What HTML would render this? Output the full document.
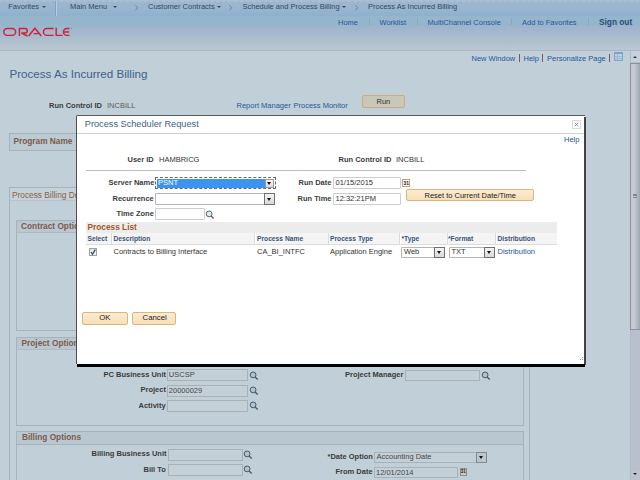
<!DOCTYPE html><html><head><meta charset="utf-8"><style>
html,body{margin:0;padding:0;width:640px;height:480px;overflow:hidden;background:#c1d0d8;}
.t{position:absolute;white-space:pre;font-family:"Liberation Sans", sans-serif;}
</style></head><body>
<div style="position:absolute;left:0px;top:0px;width:640px;height:16px;background:linear-gradient(#9db7cf,#9ab5ce 50%,#90b0ce);"></div>
<div style="position:absolute;left:0px;top:0px;width:640px;height:1px;background:#a9bed3;"></div>
<div style="position:absolute;left:0px;top:1px;width:640px;height:1px;background:repeating-linear-gradient(90deg,#adc1d5 0 3px,#9fb8d0 3px 6px);"></div>
<div style="position:absolute;left:0px;top:16px;width:640px;height:35px;background:linear-gradient(#94b6cc 0px,#96b5cc 9px,#a0b5cc 12px,#a8b7cf 18px,#abbdcb 22px,#b2c1ce 28px,#bac8d5 34px,#bac8d5 35px);"></div>
<div style="position:absolute;left:0px;top:50px;width:640px;height:1.5px;background:#acb7c2;"></div>
<div style="position:absolute;left:0px;top:51px;width:640px;height:429px;background:#c1d0d8;"></div>
<div class="t" style="left:8.25px;top:2.82px;font-size:7.5px;line-height:7.5px;color:#33476a;font-weight:normal;">Favorites</div>
<div class="t" style="left:70.00px;top:2.82px;font-size:7.5px;line-height:7.5px;color:#33476a;font-weight:normal;">Main Menu</div>
<div class="t" style="left:148.00px;top:2.82px;font-size:7.5px;line-height:7.5px;color:#33476a;font-weight:normal;">Customer Contracts</div>
<div class="t" style="left:242.50px;top:2.82px;font-size:7.5px;line-height:7.5px;color:#33476a;font-weight:normal;">Schedule and Process Billing</div>
<div class="t" style="left:368.00px;top:2.82px;font-size:7.5px;line-height:7.5px;color:#33476a;font-weight:normal;">Process As Incurred Billing</div>
<div style="position:absolute;left:42px;top:6px;width:0;height:0;border-left:2.3px solid transparent;border-right:2.3px solid transparent;border-top:2.6px solid #3d4650;"></div>
<div style="position:absolute;left:112.5px;top:6px;width:0;height:0;border-left:2.3px solid transparent;border-right:2.3px solid transparent;border-top:2.6px solid #3d4650;"></div>
<div style="position:absolute;left:216.5px;top:6px;width:0;height:0;border-left:2.3px solid transparent;border-right:2.3px solid transparent;border-top:2.6px solid #3d4650;"></div>
<div style="position:absolute;left:342px;top:6px;width:0;height:0;border-left:2.3px solid transparent;border-right:2.3px solid transparent;border-top:2.6px solid #3d4650;"></div>
<svg style="position:absolute;left:134.5px;top:5px" width="4" height="6" viewBox="0 0 4 6"><polyline points="0.4,0.3 2.7,2.8 0.4,5.3" fill="none" stroke="#667c98" stroke-width="0.9"/></svg>
<svg style="position:absolute;left:229px;top:5px" width="4" height="6" viewBox="0 0 4 6"><polyline points="0.4,0.3 2.7,2.8 0.4,5.3" fill="none" stroke="#667c98" stroke-width="0.9"/></svg>
<svg style="position:absolute;left:355px;top:5px" width="4" height="6" viewBox="0 0 4 6"><polyline points="0.4,0.3 2.7,2.8 0.4,5.3" fill="none" stroke="#667c98" stroke-width="0.9"/></svg>
<div style="position:absolute;left:55px;top:1px;width:1px;height:15px;background:#80a0c0;"></div>
<div style="position:absolute;left:56px;top:1px;width:1px;height:15px;background:#bccdda;"></div>
<div class="t" style="left:338.00px;top:18.52px;font-size:7.5px;line-height:7.5px;color:#28559a;font-weight:normal;">Home</div>
<div class="t" style="left:379.50px;top:18.52px;font-size:7.5px;line-height:7.5px;color:#28559a;font-weight:normal;">Worklist</div>
<div class="t" style="left:427.50px;top:18.52px;font-size:7.5px;line-height:7.5px;color:#28559a;font-weight:normal;">MultiChannel Console</div>
<div class="t" style="left:522.00px;top:18.52px;font-size:7.5px;line-height:7.5px;color:#28559a;font-weight:normal;">Add to Favorites</div>
<div class="t" style="left:599.00px;top:17.72px;font-size:8.3px;line-height:8.3px;color:#2d4a76;font-weight:bold;">Sign out</div>
<div style="position:absolute;left:369px;top:17.5px;width:1px;height:7px;background:#8ea6bd;"></div>
<div style="position:absolute;left:416.5px;top:17.5px;width:1px;height:7px;background:#8ea6bd;"></div>
<div style="position:absolute;left:511px;top:17.5px;width:1px;height:7px;background:#8ea6bd;"></div>
<div style="position:absolute;left:587.5px;top:17.5px;width:1px;height:7px;background:#8ea6bd;"></div>
<svg style="position:absolute;left:0;top:20px" width="80" height="20" viewBox="0 20 80 20"><g fill="none" stroke="#c6263c" stroke-width="1.45">
<rect x="3.75" y="28.45" width="11.9" height="6.9" rx="3.45"/>
<path d="M19.4,36 V28.45 H25 A2.3,2.3 0 0 1 25,33.05 H21.5 L27.6,36"/>
<path d="M28.6,36 L34.9,28.2 L41.3,36 M33.6,33.6 H38.3"/>
<path d="M53.6,28.45 H46.9 A3.45,3.45 0 0 0 46.9,35.35 H53.6"/>
<path d="M56.2,27.8 V35.35 H62.6"/>
<path d="M69.5,28.45 H66.9 A3.45,3.45 0 0 0 66.9,35.35 H69.5 M63.6,31.9 H69.2"/>
</g><circle cx="71.3" cy="28.3" r="0.45" fill="#c8283e"/></svg>
<div class="t" style="left:9.50px;top:67.99px;font-size:11.6px;line-height:11.6px;color:#40618c;font-weight:normal;">Process As Incurred Billing</div>
<div class="t" style="left:49.00px;top:101.62px;font-size:7.5px;line-height:7.5px;color:#3b3b3b;font-weight:bold;">Run Control ID</div>
<div class="t" style="left:107.00px;top:101.62px;font-size:7.5px;line-height:7.5px;color:#5a5a5a;font-weight:normal;">INCBILL</div>
<div class="t" style="left:236.50px;top:101.62px;font-size:7.5px;line-height:7.5px;color:#28559a;font-weight:normal;">Report Manager</div>
<div class="t" style="left:293.50px;top:101.62px;font-size:7.5px;line-height:7.5px;color:#28559a;font-weight:normal;">Process Monitor</div>
<div style="position:absolute;left:362px;top:95.3px;width:42.5px;height:12.5px;background:#c9c7b8;border:1px solid #c9ad7e;border-radius:2px;box-sizing:border-box;"></div>
<div class="t" style="left:376.50px;top:98.02px;font-size:7.5px;line-height:7.5px;color:#333;font-weight:normal;">Run</div>
<div class="t" style="left:471.50px;top:54.52px;font-size:7.5px;line-height:7.5px;color:#28559a;font-weight:normal;">New Window</div>
<div class="t" style="left:523.50px;top:54.52px;font-size:7.5px;line-height:7.5px;color:#28559a;font-weight:normal;">Help</div>
<div class="t" style="left:547.00px;top:54.52px;font-size:7.5px;line-height:7.5px;color:#28559a;font-weight:normal;">Personalize Page</div>
<div style="position:absolute;left:518.8px;top:53.5px;width:1px;height:8.5px;background:#74566e;"></div>
<div style="position:absolute;left:542px;top:53.5px;width:1px;height:8.5px;background:#74566e;"></div>
<div style="position:absolute;left:609px;top:53.5px;width:1px;height:8.5px;background:#74566e;"></div>
<div style="position:absolute;left:614px;top:52px;width:9px;height:9px;border:1px solid #7da2cf;box-sizing:border-box;background:#bccfe2;"></div>
<div style="position:absolute;left:615px;top:53px;width:7px;height:1.3px;background:#7da2cf;"></div>
<div style="position:absolute;left:615px;top:56.2px;width:7px;height:0.6px;background:#9db8d8;"></div>
<div style="position:absolute;left:615px;top:58.4px;width:7px;height:0.6px;background:#9db8d8;"></div>
<div style="position:absolute;left:617.3px;top:54.3px;width:0.6px;height:5.7px;background:#9db8d8;"></div>
<div style="position:absolute;left:630px;top:51px;width:10px;height:429px;background:#b9c0cd;"></div>
<div style="position:absolute;left:630px;top:51px;width:10px;height:11px;background:#c6d2d9;"></div>
<div style="position:absolute;left:630px;top:51px;width:1px;height:429px;background:#b1b9c6;"></div>
<div style="position:absolute;left:631px;top:470px;width:9px;height:10px;background:#bcc3cf;"></div>
<div style="position:absolute;left:632.5px;top:55.5px;width:0;height:0;border-left:2px solid transparent;border-right:2px solid transparent;border-bottom:2.5px solid #333;"></div>
<div style="position:absolute;left:632.5px;top:473px;width:0;height:0;border-left:2.5px solid transparent;border-right:2.5px solid transparent;border-top:2.5px solid #222;"></div>
<div style="position:absolute;left:630px;top:62.5px;width:9.5px;height:267px;background:linear-gradient(90deg,#bfc6d2,#c9cdd8 30%,#aab1ba 85%,#9aa2aa);border:1px solid #8a9398;border-right:none;box-sizing:border-box;"></div>
<div style="position:absolute;left:633px;top:193.5px;width:4px;height:0.8px;background:#7c848c;"></div>
<div style="position:absolute;left:633px;top:195.3px;width:4px;height:0.8px;background:#7c848c;"></div>
<div style="position:absolute;left:633px;top:197.1px;width:4px;height:0.8px;background:#7c848c;"></div>
<div style="position:absolute;left:9px;top:133px;width:70px;height:18px;border:1px solid #a8b2ba;background:#bccad3;box-sizing:border-box;"></div>
<div class="t" style="left:13.40px;top:137.22px;font-size:8.3px;line-height:8.3px;color:#7d5a4a;font-weight:bold;">Program Name</div>
<div style="position:absolute;left:9px;top:187px;width:521px;height:310px;border:1px solid #a8b2ba;box-sizing:border-box;"></div>
<div style="position:absolute;left:10px;top:188px;width:519px;height:13px;background:#c5d2d9;border-bottom:1px solid #b9c5cc;box-sizing:border-box;"></div>
<div class="t" style="left:12.00px;top:190.92px;font-size:8.3px;line-height:8.3px;color:#8a6048;font-weight:normal;">Process Billing Details</div>
<div style="position:absolute;left:16px;top:220px;width:508px;height:111px;border:1px solid #a8b2ba;box-sizing:border-box;"></div>
<div style="position:absolute;left:17px;top:221px;width:506px;height:12px;background:#b9c7d0;border-bottom:1px solid #aeb9c0;box-sizing:border-box;"></div>
<div class="t" style="left:21.00px;top:221.67px;font-size:8.3px;line-height:8.3px;color:#7d5a4a;font-weight:bold;">Contract Options</div>
<div style="position:absolute;left:16px;top:337px;width:508px;height:89px;border:1px solid #a8b2ba;box-sizing:border-box;"></div>
<div style="position:absolute;left:17px;top:338px;width:506px;height:12px;background:#b9c7d0;border-bottom:1px solid #aeb9c0;box-sizing:border-box;"></div>
<div class="t" style="left:21.50px;top:338.72px;font-size:8.3px;line-height:8.3px;color:#7d5a4a;font-weight:bold;">Project Options</div>
<div class="t" style="left:103.50px;top:371.02px;font-size:7.5px;line-height:7.5px;color:#3b3b3b;font-weight:bold;">PC Business Unit</div>
<div class="t" style="left:140.50px;top:386.02px;font-size:7.5px;line-height:7.5px;color:#3b3b3b;font-weight:bold;">Project</div>
<div class="t" style="left:138.50px;top:401.52px;font-size:7.5px;line-height:7.5px;color:#3b3b3b;font-weight:bold;">Activity</div>
<div class="t" style="left:345.00px;top:371.02px;font-size:7.5px;line-height:7.5px;color:#3b3b3b;font-weight:bold;">Project Manager</div>
<div style="position:absolute;left:167px;top:369px;width:81px;height:12px;border:1px solid #a9b1b6;background:#c3d0d8;box-sizing:border-box;"></div>
<div class="t" style="left:168.80px;top:371.02px;font-size:7.5px;line-height:7.5px;color:#474747;font-weight:normal;">USCSP</div>
<div style="position:absolute;left:167px;top:385px;width:81px;height:12px;border:1px solid #a9b1b6;background:#c3d0d8;box-sizing:border-box;"></div>
<div class="t" style="left:168.80px;top:386.52px;font-size:7.5px;line-height:7.5px;color:#474747;font-weight:normal;">20000029</div>
<div style="position:absolute;left:167px;top:400px;width:81px;height:12px;border:1px solid #a9b1b6;background:#c3d0d8;box-sizing:border-box;"></div>
<div style="position:absolute;left:405px;top:370px;width:75px;height:11px;border:1px solid #a9b1b6;background:#c3d0d8;box-sizing:border-box;"></div>
<div style="position:absolute;left:16px;top:431px;width:508px;height:60px;border:1px solid #a8b2ba;box-sizing:border-box;"></div>
<div style="position:absolute;left:17px;top:432px;width:506px;height:13px;background:#b9c7d0;border-bottom:1px solid #a8b2ba;box-sizing:border-box;"></div>
<div class="t" style="left:22.00px;top:432.92px;font-size:8.3px;line-height:8.3px;color:#7d5a4a;font-weight:bold;">Billing Options</div>
<div class="t" style="left:91.50px;top:450.22px;font-size:7.5px;line-height:7.5px;color:#3b3b3b;font-weight:bold;">Billing Business Unit</div>
<div class="t" style="left:143.50px;top:466.02px;font-size:7.5px;line-height:7.5px;color:#3b3b3b;font-weight:bold;">Bill To</div>
<div style="position:absolute;left:168px;top:449px;width:75px;height:12px;border:1px solid #a9b1b6;background:#c3d0d8;box-sizing:border-box;"></div>
<div style="position:absolute;left:168px;top:464px;width:75px;height:12px;border:1px solid #a9b1b6;background:#c3d0d8;box-sizing:border-box;"></div>
<div class="t" style="left:327.50px;top:452.52px;font-size:7.5px;line-height:7.5px;color:#3b3b3b;font-weight:bold;">*Date Option</div>
<div class="t" style="left:335.50px;top:468.02px;font-size:7.5px;line-height:7.5px;color:#3b3b3b;font-weight:bold;">From Date</div>
<div style="position:absolute;left:374px;top:452px;width:113px;height:11px;border:1px solid #a9b1b6;background:#c3d0d8;box-sizing:border-box;"></div>
<div class="t" style="left:376.50px;top:453.02px;font-size:7.5px;line-height:7.5px;color:#474747;font-weight:normal;">Accounting Date</div>
<div style="position:absolute;left:374px;top:467px;width:84px;height:11px;border:1px solid #a9b1b6;background:#c3d0d8;box-sizing:border-box;"></div>
<div class="t" style="left:376.00px;top:468.52px;font-size:7.5px;line-height:7.5px;color:#474747;font-weight:normal;">12/01/2014</div>
<div style="position:absolute;left:75.5px;top:114.6px;width:509px;height:249.6px;background:#fff;border-left:1.5px solid #4d4d4d;border-top:1.3px solid #5a5a5a;border-top-left-radius:1.5px;box-sizing:border-box;"></div>
<div style="position:absolute;left:584.2px;top:116.5px;width:1.8px;height:248px;background:#444;"></div>
<div style="position:absolute;left:76.7px;top:364.2px;width:508.5px;height:3.2px;background:#000;"></div>
<div class="t" style="left:84.80px;top:119.50px;font-size:9.2px;line-height:9.2px;color:#3e5f86;font-weight:normal;">Process Scheduler Request</div>
<div style="position:absolute;left:77px;top:133px;width:507px;height:1px;background:#c9d3d8;"></div>
<div style="position:absolute;left:572px;top:120px;width:9px;height:9px;border:1px solid #dadada;box-sizing:border-box;"></div>
<svg style="position:absolute;left:572px;top:120px" width="9" height="9" viewBox="0 0 9 9"><path d="M2.7,2.7 L6.3,6.3 M6.3,2.7 L2.7,6.3" stroke="#6a7e98" stroke-width="0.85"/></svg>
<div class="t" style="left:564.00px;top:136.02px;font-size:7.5px;line-height:7.5px;color:#28559a;font-weight:normal;">Help</div>
<div class="t" style="left:127.50px;top:156.02px;font-size:7.5px;line-height:7.5px;color:#3b3b3b;font-weight:bold;">User ID</div>
<div class="t" style="left:159.00px;top:156.02px;font-size:7.5px;line-height:7.5px;color:#333;font-weight:normal;">HAMBRICG</div>
<div class="t" style="left:338.50px;top:156.02px;font-size:7.5px;line-height:7.5px;color:#3b3b3b;font-weight:bold;">Run Control ID</div>
<div class="t" style="left:396.00px;top:156.02px;font-size:7.5px;line-height:7.5px;color:#333;font-weight:normal;">INCBILL</div>
<div style="position:absolute;left:86px;top:170px;width:440px;height:1px;background:#bcbcbc;"></div>
<div class="t" style="left:108.50px;top:179.22px;font-size:7.5px;line-height:7.5px;color:#3b3b3b;font-weight:bold;">Server Name</div>
<div class="t" style="left:112.50px;top:194.82px;font-size:7.5px;line-height:7.5px;color:#3b3b3b;font-weight:bold;">Recurrence</div>
<div class="t" style="left:116.50px;top:210.22px;font-size:7.5px;line-height:7.5px;color:#3b3b3b;font-weight:bold;">Time Zone</div>
<div class="t" style="left:298.50px;top:179.22px;font-size:7.5px;line-height:7.5px;color:#3b3b3b;font-weight:bold;">Run Date</div>
<div class="t" style="left:297.50px;top:194.82px;font-size:7.5px;line-height:7.5px;color:#3b3b3b;font-weight:bold;">Run Time</div>
<div style="position:absolute;left:155px;top:177px;width:121px;height:12px;border:1px dashed #6a6a6a;box-sizing:border-box;background:#fff;"></div>
<div style="position:absolute;left:156.5px;top:178.5px;width:108.2px;height:9px;background:#3d93f0;"></div>
<div class="t" style="left:158.00px;top:178.82px;font-size:7.5px;line-height:7.5px;color:#fff;font-weight:normal;">PSNT</div>
<div style="position:absolute;left:264.7px;top:178.5px;width:9.8px;height:9px;background:linear-gradient(#f6f6f6,#dadada);border:1px solid #9a9a9a;box-sizing:border-box;"></div>
<div style="position:absolute;left:267.09999999999997px;top:181.8px;width:0;height:0;border-left:2.5px solid transparent;border-right:2.5px solid transparent;border-top:3px solid #111;"></div>
<div style="position:absolute;left:155px;top:193px;width:120px;height:12px;border:1px solid #b5b5b5;border-radius:1px;box-sizing:border-box;background:#fff;"></div>
<div style="position:absolute;left:264px;top:193px;width:11px;height:12px;background:linear-gradient(#f4f4f4,#d9d9d9);border:1px solid #6f6f6f;box-sizing:border-box;"></div>
<div style="position:absolute;left:267.0px;top:197.8px;width:0;height:0;border-left:2.5px solid transparent;border-right:2.5px solid transparent;border-top:3px solid #111;"></div>
<div style="position:absolute;left:155px;top:208px;width:50px;height:12px;border:1px solid #cdcdcd;border-radius:1px;box-sizing:border-box;background:#fff;"></div>
<svg style="position:absolute;left:205px;top:210px" width="10" height="10" viewBox="0 0 10 10"><circle cx="4.1" cy="3.9" r="2.9" fill="#d6ecfb" stroke="#5c6670" stroke-width="1"/><line x1="6.1" y1="6.1" x2="8.7" y2="8.6" stroke="#8a5a2c" stroke-width="1.4"/></svg>
<div style="position:absolute;left:333px;top:177px;width:68px;height:12px;border:1px solid #cdcdcd;border-radius:1px;box-sizing:border-box;background:#fff;"></div>
<div class="t" style="left:335.50px;top:179.32px;font-size:7.5px;line-height:7.5px;color:#333;font-weight:normal;">01/15/2015</div>
<div style="position:absolute;left:333px;top:193px;width:68px;height:12px;border:1px solid #cdcdcd;border-radius:1px;box-sizing:border-box;background:#fff;"></div>
<div class="t" style="left:335.50px;top:195.32px;font-size:7.5px;line-height:7.5px;color:#333;font-weight:normal;">12:32:21PM</div>
<div style="position:absolute;left:402px;top:179px;width:8px;height:8px;border:1px solid #c9a46e;box-sizing:border-box;background:#fff;"></div>
<div class="t" style="left:403.50px;top:180.55px;font-size:5px;line-height:5px;color:#222;font-weight:bold;">31</div>
<div style="position:absolute;left:406px;top:188.5px;width:128px;height:12.5px;background:linear-gradient(#fcebd0,#f7dfb8);border:1px solid #dfb483;border-radius:2px;box-sizing:border-box;"></div>
<div class="t" style="left:424.50px;top:191.52px;font-size:7.5px;line-height:7.5px;color:#222;font-weight:normal;">Reset to Current Date/Time</div>
<div style="position:absolute;left:85.5px;top:221.5px;width:471.5px;height:11px;background:#ececec;"></div>
<div class="t" style="left:87.50px;top:223.42px;font-size:8.3px;line-height:8.3px;color:#9c5a2c;font-weight:bold;">Process List</div>
<div style="position:absolute;left:85.5px;top:232.5px;width:471.5px;height:12px;background:#f4f4f4;border-bottom:1px solid #dcdcdc;box-sizing:border-box;"></div>
<div style="position:absolute;left:110.5px;top:233px;width:1px;height:11px;background:#dcdcdc;"></div>
<div style="position:absolute;left:111.5px;top:233px;width:1px;height:11px;background:#fff;"></div>
<div style="position:absolute;left:254px;top:233px;width:1px;height:11px;background:#dcdcdc;"></div>
<div style="position:absolute;left:255px;top:233px;width:1px;height:11px;background:#fff;"></div>
<div style="position:absolute;left:327.5px;top:233px;width:1px;height:11px;background:#dcdcdc;"></div>
<div style="position:absolute;left:328.5px;top:233px;width:1px;height:11px;background:#fff;"></div>
<div style="position:absolute;left:399px;top:233px;width:1px;height:11px;background:#dcdcdc;"></div>
<div style="position:absolute;left:400px;top:233px;width:1px;height:11px;background:#fff;"></div>
<div style="position:absolute;left:446.5px;top:233px;width:1px;height:11px;background:#dcdcdc;"></div>
<div style="position:absolute;left:447.5px;top:233px;width:1px;height:11px;background:#fff;"></div>
<div style="position:absolute;left:495px;top:233px;width:1px;height:11px;background:#dcdcdc;"></div>
<div style="position:absolute;left:496px;top:233px;width:1px;height:11px;background:#fff;"></div>
<div class="t" style="left:87.50px;top:236.13px;font-size:6.7px;line-height:6.7px;color:#37557d;font-weight:bold;">Select</div>
<div class="t" style="left:113.50px;top:236.13px;font-size:6.7px;line-height:6.7px;color:#37557d;font-weight:bold;">Description</div>
<div class="t" style="left:257.00px;top:236.13px;font-size:6.7px;line-height:6.7px;color:#37557d;font-weight:bold;">Process Name</div>
<div class="t" style="left:330.00px;top:236.13px;font-size:6.7px;line-height:6.7px;color:#37557d;font-weight:bold;">Process Type</div>
<div class="t" style="left:401.50px;top:236.13px;font-size:6.7px;line-height:6.7px;color:#37557d;font-weight:bold;">*Type</div>
<div class="t" style="left:448.00px;top:236.13px;font-size:6.7px;line-height:6.7px;color:#37557d;font-weight:bold;">*Format</div>
<div class="t" style="left:497.50px;top:236.13px;font-size:6.7px;line-height:6.7px;color:#37557d;font-weight:bold;">Distribution</div>
<div style="position:absolute;left:88.5px;top:248px;width:8px;height:8px;border:1px solid #a0a0a0;box-sizing:border-box;background:linear-gradient(#e4e4e4,#fafafa);"></div>
<svg style="position:absolute;left:88.5px;top:248px" width="8" height="8" viewBox="0 0 8 8"><polyline points="2,4 3.5,6.3 6.3,1.6" fill="none" stroke="#2b4c8c" stroke-width="1.3"/></svg>
<div class="t" style="left:113.50px;top:248.02px;font-size:7.5px;line-height:7.5px;color:#333;font-weight:normal;">Contracts to Billing Interface</div>
<div class="t" style="left:257.00px;top:248.02px;font-size:7.5px;line-height:7.5px;color:#333;font-weight:normal;">CA_BI_INTFC</div>
<div class="t" style="left:330.00px;top:248.02px;font-size:7.5px;line-height:7.5px;color:#333;font-weight:normal;">Application Engine</div>
<div style="position:absolute;left:401px;top:246.5px;width:44px;height:11px;border:1px solid #b5b5b5;border-radius:1px;box-sizing:border-box;background:#fff;"></div>
<div class="t" style="left:404.00px;top:248.12px;font-size:7.5px;line-height:7.5px;color:#333;font-weight:normal;">Web</div>
<div style="position:absolute;left:434px;top:246.5px;width:11px;height:11px;background:linear-gradient(#f4f4f4,#d9d9d9);border:1px solid #6f6f6f;box-sizing:border-box;"></div>
<div style="position:absolute;left:437.0px;top:250.8px;width:0;height:0;border-left:2.5px solid transparent;border-right:2.5px solid transparent;border-top:3px solid #111;"></div>
<div style="position:absolute;left:448.5px;top:246.5px;width:46px;height:11px;border:1px solid #b5b5b5;border-radius:1px;box-sizing:border-box;background:#fff;"></div>
<div class="t" style="left:451.50px;top:248.12px;font-size:7.5px;line-height:7.5px;color:#333;font-weight:normal;">TXT</div>
<div style="position:absolute;left:483.5px;top:246.5px;width:11px;height:11px;background:linear-gradient(#f4f4f4,#d9d9d9);border:1px solid #6f6f6f;box-sizing:border-box;"></div>
<div style="position:absolute;left:486.5px;top:250.8px;width:0;height:0;border-left:2.5px solid transparent;border-right:2.5px solid transparent;border-top:3px solid #111;"></div>
<div class="t" style="left:497.50px;top:248.02px;font-size:7.5px;line-height:7.5px;color:#28559a;font-weight:normal;">Distribution</div>
<div style="position:absolute;left:82px;top:312px;width:46px;height:12.5px;background:linear-gradient(#fcebd0,#f7dfb8);border:1px solid #dfb483;border-radius:2px;box-sizing:border-box;"></div>
<div class="t" style="left:99.30px;top:314.18px;font-size:7.8px;line-height:7.8px;color:#222;font-weight:normal;">OK</div>
<div style="position:absolute;left:132px;top:312px;width:44px;height:12.5px;background:linear-gradient(#fcebd0,#f7dfb8);border:1px solid #dfb483;border-radius:2px;box-sizing:border-box;"></div>
<div class="t" style="left:142.50px;top:314.18px;font-size:7.8px;line-height:7.8px;color:#222;font-weight:normal;">Cancel</div>
<div style="position:absolute;left:582px;top:357px;width:1px;height:1px;background:#999;"></div>
<div style="position:absolute;left:580px;top:359px;width:1px;height:1px;background:#999;"></div>
<div style="position:absolute;left:582px;top:359px;width:1px;height:1px;background:#999;"></div>
<svg style="position:absolute;left:249px;top:370.5px" width="10" height="10" viewBox="0 0 10 10"><circle cx="4.1" cy="3.9" r="2.9" fill="#a9c3d8" stroke="#4e5860" stroke-width="1"/><line x1="6.1" y1="6.1" x2="8.7" y2="8.6" stroke="#5a5550" stroke-width="1.4"/></svg>
<svg style="position:absolute;left:249px;top:385.5px" width="10" height="10" viewBox="0 0 10 10"><circle cx="4.1" cy="3.9" r="2.9" fill="#a9c3d8" stroke="#4e5860" stroke-width="1"/><line x1="6.1" y1="6.1" x2="8.7" y2="8.6" stroke="#5a5550" stroke-width="1.4"/></svg>
<svg style="position:absolute;left:249px;top:401px" width="10" height="10" viewBox="0 0 10 10"><circle cx="4.1" cy="3.9" r="2.9" fill="#a9c3d8" stroke="#4e5860" stroke-width="1"/><line x1="6.1" y1="6.1" x2="8.7" y2="8.6" stroke="#5a5550" stroke-width="1.4"/></svg>
<svg style="position:absolute;left:481px;top:370.5px" width="10" height="10" viewBox="0 0 10 10"><circle cx="4.1" cy="3.9" r="2.9" fill="#a9c3d8" stroke="#4e5860" stroke-width="1"/><line x1="6.1" y1="6.1" x2="8.7" y2="8.6" stroke="#5a5550" stroke-width="1.4"/></svg>
<svg style="position:absolute;left:243px;top:449.5px" width="10" height="10" viewBox="0 0 10 10"><circle cx="4.1" cy="3.9" r="2.9" fill="#a9c3d8" stroke="#4e5860" stroke-width="1"/><line x1="6.1" y1="6.1" x2="8.7" y2="8.6" stroke="#5a5550" stroke-width="1.4"/></svg>
<svg style="position:absolute;left:243px;top:465px" width="10" height="10" viewBox="0 0 10 10"><circle cx="4.1" cy="3.9" r="2.9" fill="#a9c3d8" stroke="#4e5860" stroke-width="1"/><line x1="6.1" y1="6.1" x2="8.7" y2="8.6" stroke="#5a5550" stroke-width="1.4"/></svg>
<div style="position:absolute;left:475.5px;top:452px;width:11.5px;height:11px;background:#bcc6cc;border:1px solid #7f898e;box-sizing:border-box;"></div>
<div style="position:absolute;left:478.8px;top:456px;width:0;height:0;border-left:2.5px solid transparent;border-right:2.5px solid transparent;border-top:3px solid #111;"></div>
<div style="position:absolute;left:459.5px;top:468px;width:7px;height:8px;border:1px solid #a08a60;box-sizing:border-box;"></div>
<div class="t" style="left:460.70px;top:470.40px;font-size:4.6px;line-height:4.6px;color:#222;font-weight:bold;">31</div>
</body></html>
